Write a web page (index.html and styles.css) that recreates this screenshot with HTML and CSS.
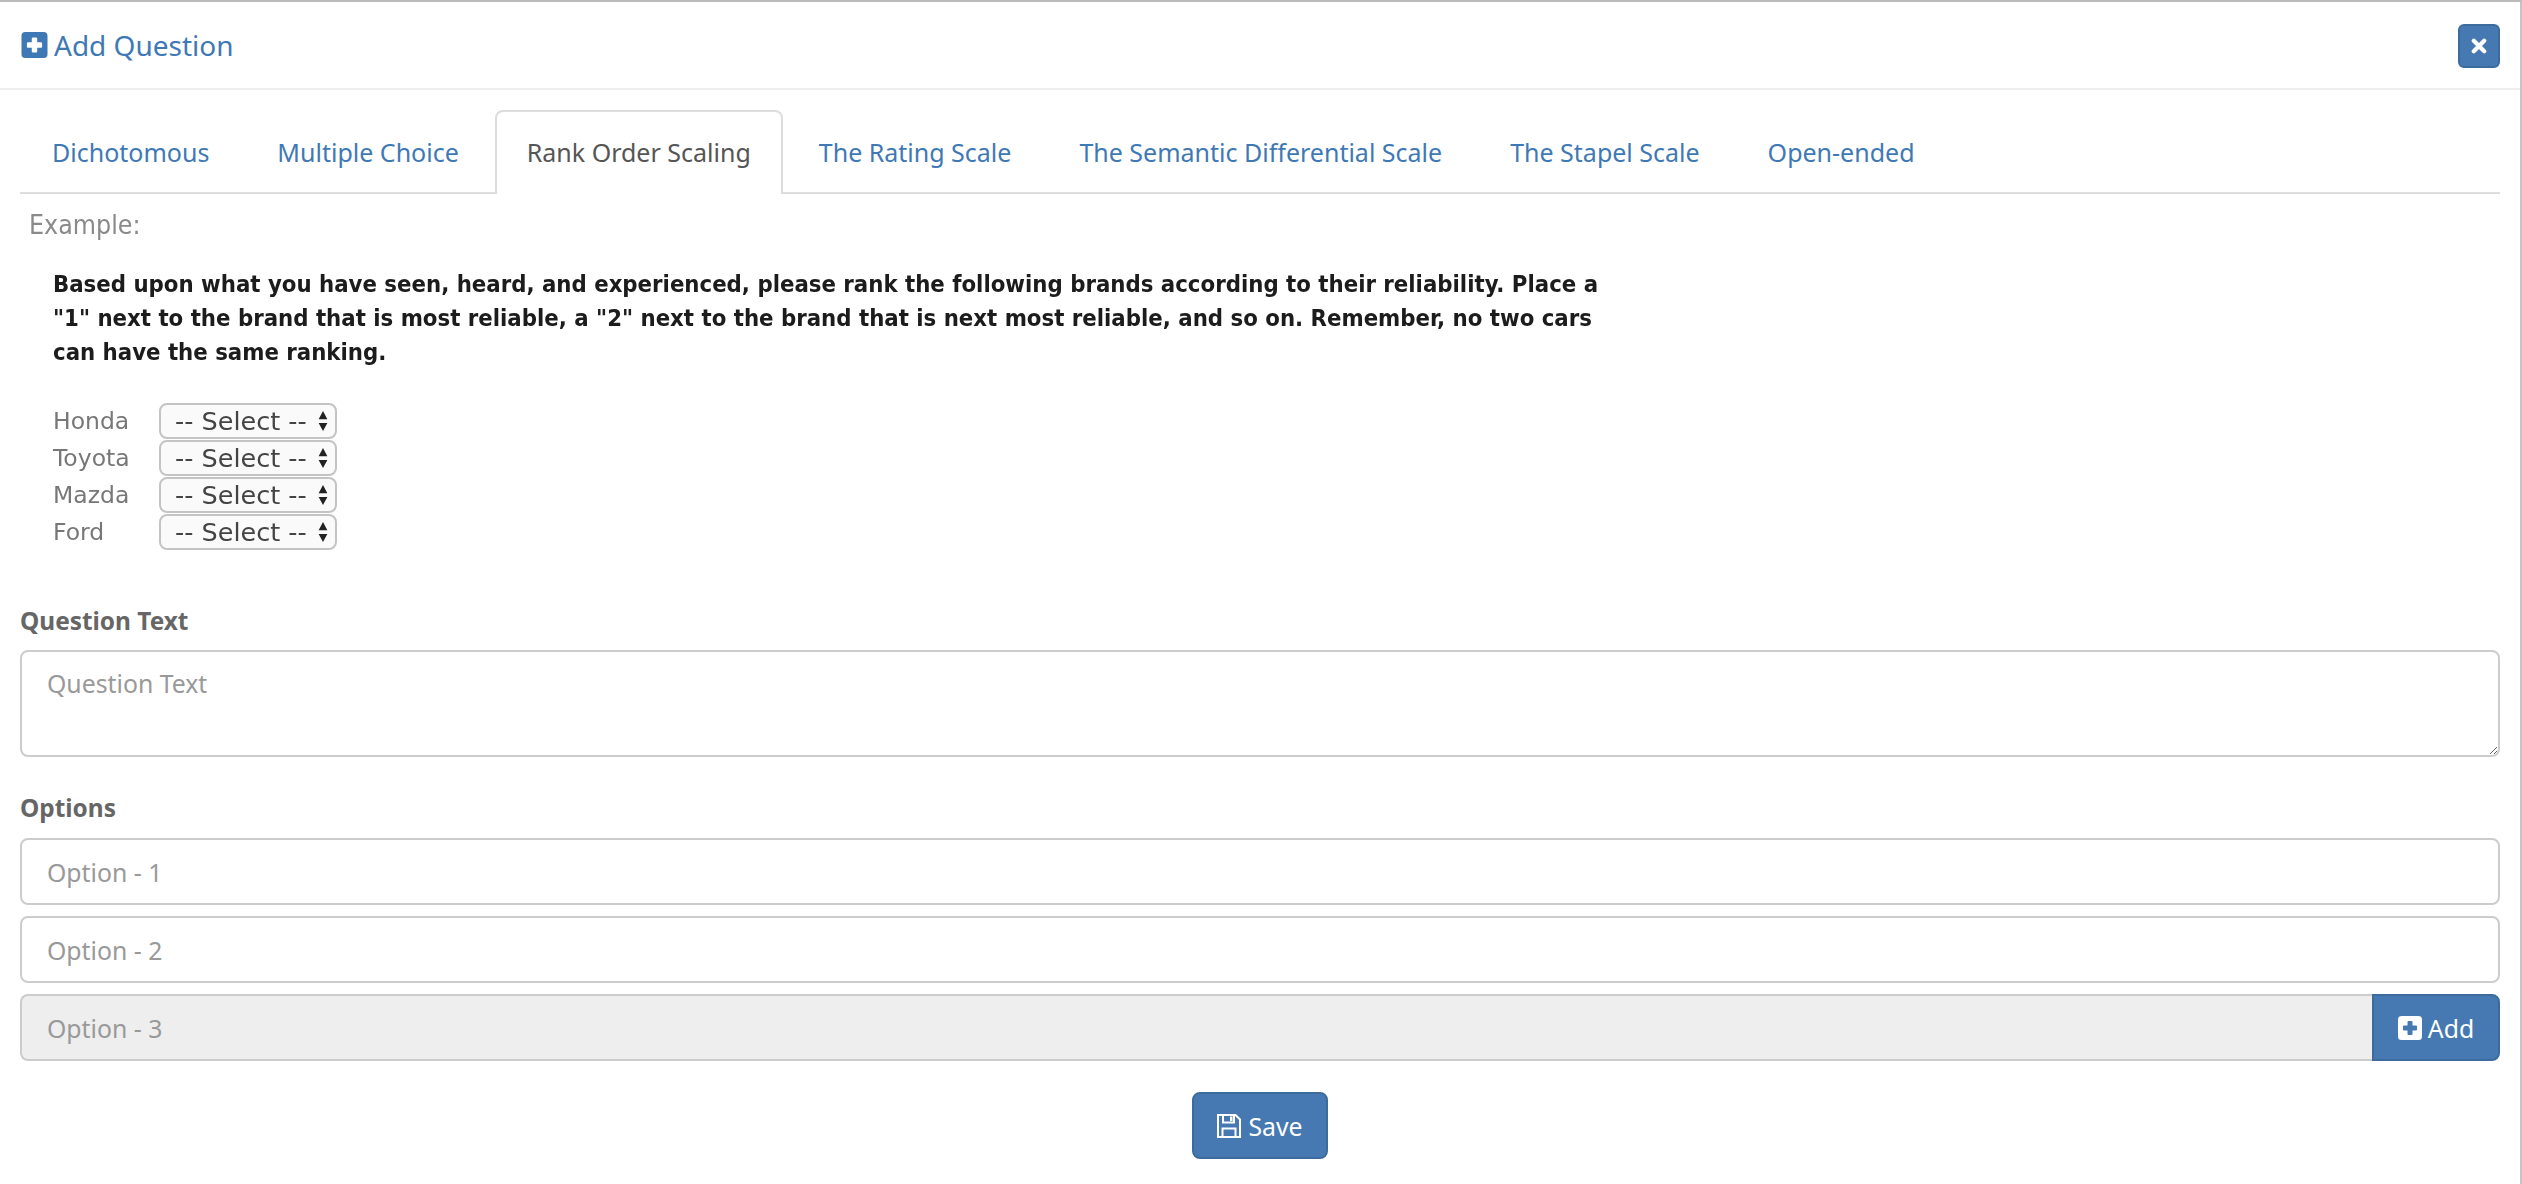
FILE: index.html
```html
<!DOCTYPE html>
<html lang="en">
<head>
<meta charset="utf-8">
<title>Add Question</title>
<link rel="stylesheet" href="styles.css">
</head>
<body>
<div class="modal">
  <header class="modal-header">
    <h1 class="modal-title">
      <svg class="icon icon-title" viewBox="0 0 24 24"><path fill="currentColor" fill-rule="evenodd" d="M3.500 0h17A3.500 3.500 0 0 1 24 3.500v17a3.500 3.500 0 0 1-3.500 3.500h-17A3.500 3.500 0 0 1 0 20.500v-17A3.500 3.500 0 0 1 3.500 0zM10.500 5a1 1 0 0 0-1 1v3.500H6a1 1 0 0 0-1 1v3a1 1 0 0 0 1 1h3.500V18a1 1 0 0 0 1 1h3a1 1 0 0 0 1-1v-3.500H18a1 1 0 0 0 1-1v-3a1 1 0 0 0-1-1h-3.500V6a1 1 0 0 0-1-1z"/></svg>
      <span>Add Question</span>
    </h1>
    <button class="btn btn-close" type="button" aria-label="Close">
      <svg class="icon icon-close" viewBox="0 0 16 16"><path fill="none" stroke="currentColor" stroke-width="4.200" stroke-linecap="round" d="M2.800 2.800l10.400 10.400M13.200 2.800L2.800 13.200"/></svg>
    </button>
  </header>

  <main class="modal-body">
    <nav class="tabs">
      <a class="tab">Dichotomous</a>
      <a class="tab">Multiple Choice</a>
      <a class="tab tab-active">Rank Order Scaling</a>
      <a class="tab">The Rating Scale</a>
      <a class="tab">The Semantic Differential Scale</a>
      <a class="tab">The Stapel Scale</a>
      <a class="tab">Open-ended</a>
    </nav>

    <section class="example">
      <div class="example-title">Example:</div>
      <p class="example-text">Based upon what you have seen, heard, and experienced, please rank the following brands according to their reliability. Place a<br>"1" next to the brand that is most reliable, a "2" next to the brand that is next most reliable, and so on. Remember, no two cars<br>can have the same ranking.</p>
      <div class="rank-list">
        <div class="rank-row"><span class="rank-name">Honda</span><span class="fake-select"><span>-- Select --</span><svg class="updown" viewBox="0 0 8 16"><path d="M4 0l3.500 6.500h-7zM4 16L.500 9.500h7z"/></svg></span></div>
        <div class="rank-row"><span class="rank-name">Toyota</span><span class="fake-select"><span>-- Select --</span><svg class="updown" viewBox="0 0 8 16"><path d="M4 0l3.500 6.500h-7zM4 16L.500 9.500h7z"/></svg></span></div>
        <div class="rank-row"><span class="rank-name">Mazda</span><span class="fake-select"><span>-- Select --</span><svg class="updown" viewBox="0 0 8 16"><path d="M4 0l3.500 6.500h-7zM4 16L.500 9.500h7z"/></svg></span></div>
        <div class="rank-row"><span class="rank-name">Ford</span><span class="fake-select"><span>-- Select --</span><svg class="updown" viewBox="0 0 8 16"><path d="M4 0l3.500 6.500h-7zM4 16L.500 9.500h7z"/></svg></span></div>
      </div>
    </section>

    <form class="question-form">
      <label class="field-label label-question">Question Text</label>
      <textarea class="control control-area" placeholder="Question Text"></textarea>
      <label class="field-label label-options">Options</label>
      <div class="options">
        <input class="control" type="text" placeholder="Option - 1">
        <input class="control" type="text" placeholder="Option - 2">
        <div class="input-group">
          <input class="control control-disabled" type="text" placeholder="Option - 3" disabled>
          <button class="btn btn-add" type="button">
            <svg class="icon icon-btn" viewBox="0 0 24 24"><path fill="currentColor" fill-rule="evenodd" d="M3.500 0h17A3.500 3.500 0 0 1 24 3.500v17a3.500 3.500 0 0 1-3.500 3.500h-17A3.500 3.500 0 0 1 0 20.500v-17A3.500 3.500 0 0 1 3.500 0zM10.500 5a1 1 0 0 0-1 1v3.500H6a1 1 0 0 0-1 1v3a1 1 0 0 0 1 1h3.500V18a1 1 0 0 0 1 1h3a1 1 0 0 0 1-1v-3.500H18a1 1 0 0 0 1-1v-3a1 1 0 0 0-1-1h-3.500V6a1 1 0 0 0-1-1z"/></svg>
            <span>Add</span>
          </button>
        </div>
      </div>
      <div class="form-actions">
        <button class="btn btn-save" type="button">
          <svg class="icon icon-btn" viewBox="0 0 24 24"><g fill="none" stroke="currentColor" stroke-width="2"><path d="M1 1h17.500L23 5.500V23H1z"/><path d="M6 1v7.500h11V1"/><path d="M5.500 23v-8.500h13V23"/></g><path fill="currentColor" d="M13 2.500h2.500v4.500H13z"/></svg>
          <span>Save</span>
        </button>
      </div>
    </form>
  </main>
</div>
</body>
</html>
```

FILE: styles.css
```css
* {
  box-sizing: border-box;
}

html,
body {
  margin: 0;
  height: 100%;
  overflow: hidden;
  background: #fff;
}

body {
  font-family: "Noto Sans", "Open Sans", sans-serif;
  font-size: 24.8px;
  color: #555;
}

.modal {
  height: 1184px;
  border-top: 2px solid #bbb;
  border-right: 2px solid #c4c4c4;
}

.modal-header {
  height: 88px;
  padding: 22px 20px 0 21px;
  border-bottom: 2px solid #eee;
  display: flex;
  justify-content: space-between;
  align-items: flex-start;
}

.modal-title {
  margin: 3px 0 0;
  display: flex;
  align-items: center;
  gap: 6px;
  font-size: 28px;
  font-weight: 400;
  line-height: 36px;
  color: #3f79b5;
}

.icon {
  display: block;
  flex: none;
}

.icon-title {
  width: 27px;
  height: 26px;
}

.icon-btn {
  width: 24px;
  height: 24px;
}

.icon-close {
  width: 16px;
  height: 16px;
}

.btn {
  font: inherit;
  color: #fff;
  background: #4679b2;
  border: 2px solid #3c6b9e;
  display: flex;
  align-items: center;
  justify-content: center;
  cursor: pointer;
}

.btn-close {
  width: 42px;
  height: 44px;
  padding: 0;
  border-radius: 6px;
}

.modal-body {
  padding: 20px 20px 0;
}

.tabs {
  height: 84px;
  display: flex;
  gap: 4px;
  border-bottom: 2px solid #ddd;
}

.tab {
  height: 84px;
  padding: 24px 30px 0;
  border: 2px solid transparent;
  border-bottom: 0;
  border-radius: 8px 8px 0 0;
  font-size: 25px;
  color: #3f79b5;
  line-height: 32px;
}

.tab-active {
  background: #fff;
  border-color: #ddd;
  color: #555;
}

.example {
  height: 411px;
  padding-top: 16px;
  color: #333;
}

.example-title {
  margin-left: 9px;
  font-family: "DejaVu Sans", sans-serif;
  font-stretch: condensed;
  font-size: 26.500px;
  line-height: 30px;
  color: #8a8a8a;
  filter: blur(0.6px);
}

.example-text {
  margin: 27px 0 0 33px;
  font-family: "DejaVu Sans", sans-serif;
  font-size: 23.7px;
  font-weight: 700;
  font-stretch: condensed;
  line-height: 34px;
  white-space: nowrap;
  color: #1c1c1c;
  filter: blur(0.6px);
}

.rank-list {
  margin: 33px 0 0 33px;
  filter: blur(0.6px);
  font-family: "DejaVu Sans", sans-serif;
  font-size: 23.500px;
  color: #777;
}

.rank-row {
  height: 37px;
  display: flex;
  align-items: center;
}

.rank-name {
  width: 106px;
}

.fake-select {
  width: 178px;
  height: 36px;
  padding: 0 7px 0 14px;
  display: flex;
  align-items: center;
  justify-content: space-between;
  background: #fafafa;
  border: 2px solid #c4c4c4;
  border-radius: 8px;
  font-size: 25.500px;
  color: #444;
  white-space: nowrap;
}

.updown {
  width: 10px;
  height: 20px;
  fill: #222;
}

.field-label {
  display: block;
  font-weight: 700;
  color: #666;
  line-height: 32px;
  font-size: 24.4px;
}

.label-question {
  margin-bottom: 13px;
}

.label-options {
  margin: 35px 0 14px;
}

.control {
  display: block;
  width: 100%;
  height: 67px;
  padding: 0 25px;
  font: inherit;
  color: #555;
  background: #fff;
  border: 2px solid #ccc;
  border-radius: 8px;
  outline: 0;
}

.control::placeholder {
  color: #999;
  opacity: 1;
}

.control-area {
  height: 107px;
  padding: 15px 25px;
  line-height: 32px;
  resize: vertical;
}

.options {
  display: flex;
  flex-direction: column;
  gap: 11px;
}

.input-group {
  display: flex;
}

.control-disabled {
  flex: 1;
  width: auto;
  min-width: 0;
  background: #eee;
  border-right: 0;
  border-radius: 8px 0 0 8px;
}

.btn-add {
  width: 128px;
  height: 67px;
  padding: 0;
  gap: 6px;
  border-radius: 0 8px 8px 0;
}

.form-actions {
  margin-top: 31px;
  display: flex;
  justify-content: center;
}

.btn-save {
  width: 136px;
  height: 67px;
  padding: 0;
  gap: 7px;
  border-radius: 8px;
}
```
